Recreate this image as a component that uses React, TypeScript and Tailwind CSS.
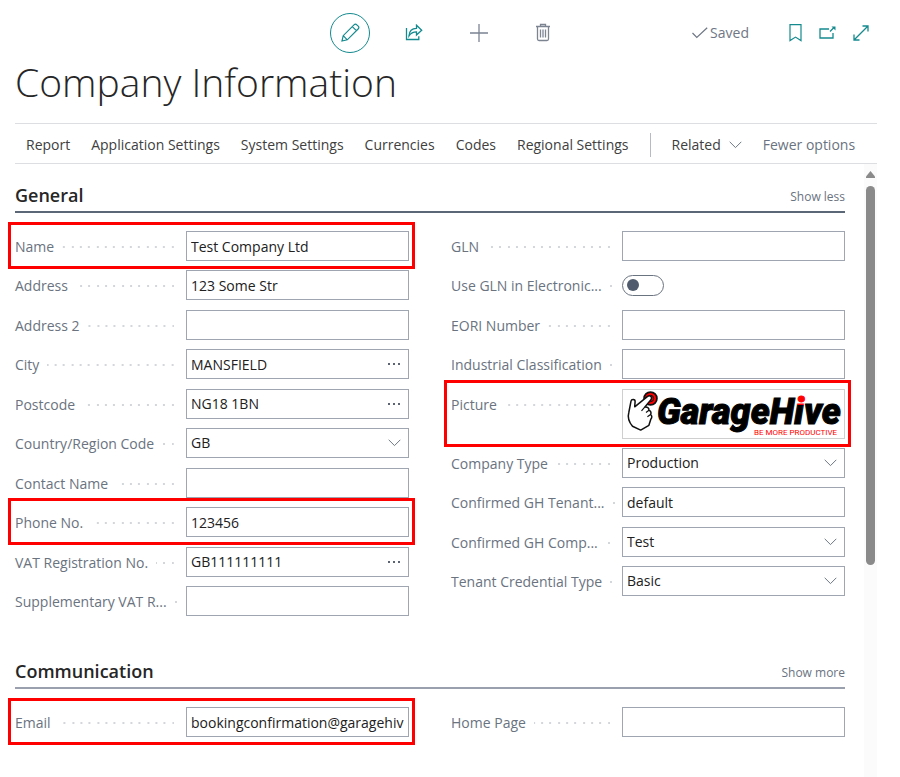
import { useId, type ReactNode } from "react";

const ink = "text-[#212121]";

function Chevron() {
  return (
    <svg width="13" height="8" viewBox="0 0 13 8" fill="none" stroke="#6f7785" aria-hidden="true">
      <path d="M.7.8 6.5 6.6 12.3.8" />
    </svg>
  );
}

function Highlight() {
  return (
    <span className="pointer-events-none absolute -top-[9px] -right-[6px] -bottom-[8px] -left-[7px] border-3 border-[#fe0000]" />
  );
}

function Row({
  label,
  id,
  highlight,
  tall,
  children,
}: {
  label: string;
  id?: string;
  highlight?: boolean;
  tall?: boolean;
  children: ReactNode;
}) {
  return (
    <div className={"relative flex " + (tall ? "h-[50px]" : "h-[30px]")}>
      <div className="flex h-8 w-[171px] shrink-0 items-center gap-2 pr-3">
        <label htmlFor={id} className="whitespace-nowrap text-[#6a7380]">
          {label}
        </label>
        <span className="h-[2px] min-w-[2px] flex-1 bg-[linear-gradient(90deg,transparent_6px,#d3d6da_6px_8px,transparent_8px_14px,#d3d6da_14px_16px,transparent_16px_23px,#d3d6da_23px_25px)] bg-[length:25px_2px] bg-right" />
      </div>
      {children}
      {highlight && <Highlight />}
    </div>
  );
}

const box = "flex min-w-0 flex-1 items-center border border-[#a0a6b1] bg-white";

function TextRow({
  label,
  value = "",
  lookup,
  highlight,
  type = "text",
}: {
  label: string;
  value?: string;
  lookup?: boolean;
  highlight?: boolean;
  type?: string;
}) {
  const id = useId();
  return (
    <Row label={label} id={id} highlight={highlight}>
      <div className={box}>
        <input
          id={id}
          type={type}
          defaultValue={value}
          className={"mx-1 h-full w-full min-w-0 flex-1 bg-transparent outline-none " + ink}
        />
        {lookup && (
          <button type="button" aria-label={"Look up " + label} className="flex h-full items-center px-[7px]">
            <svg width="13" height="2" viewBox="0 0 13 2" fill="#5b6472" aria-hidden="true">
              <path d="M0 0h2v2H0zM5 0h2v2H5zM10 0h2v2h-2z" />
            </svg>
          </button>
        )}
      </div>
    </Row>
  );
}

function SelectRow({ label, value }: { label: string; value: string }) {
  const id = useId();
  return (
    <Row label={label} id={id}>
      <div className={box + " relative"}>
        <select id={id} defaultValue={value} className={"h-full w-full appearance-none bg-transparent px-1 outline-none " + ink}>
          <option>{value}</option>
        </select>
        <span className="pointer-events-none absolute right-[7px]">
          <Chevron />
        </span>
      </div>
    </Row>
  );
}

function ToggleRow({ label }: { label: string }) {
  const id = useId();
  return (
    <Row label={label} id={id}>
      <span className="relative flex h-[21px] w-[42px] items-center self-center">
        <input
          id={id}
          type="checkbox"
          role="switch"
          className="peer h-full w-full appearance-none rounded-full border border-[#6a7380] bg-white"
        />
        <span className="pointer-events-none absolute left-[5px] size-3 rounded-full bg-[#505c6d] peer-checked:left-[25px]" />
      </span>
    </Row>
  );
}

function Logo() {
  return (
    <svg width="219" height="48" viewBox="0 0 219 48" role="img" aria-label="GarageHive" className="shrink-0">
      <defs>
        <linearGradient id="hive-dot" gradientUnits="userSpaceOnUse" x1="0" y1="0" x2="0" y2="48">
          <stop offset="0.31" stopColor="#f00" />
          <stop offset="0.31" stopColor="#000" />
        </linearGradient>
      </defs>
      <circle cx="27.500" cy="8.500" r="6.400" fill="#f00" stroke="#111" strokeWidth="1.800" />
      <circle cx="27.500" cy="8.500" r="3.200" fill="none" stroke="#111" strokeWidth="1" />
      <path
        d="M5.800 22.500 8 11.200c.5-2.500 4.300-2.200 4.100.4l-.4 5.200L24.600 6.400c2.600-1.900 5.200 1 3.300 3.300l-6.200 7.500c2.700-.5 4.300.7 4.300 3 1.900.8 2.500 2.500 1.600 4.300 1.500 1.200 1.600 3 .2 4.700l-1.900 6.100-8.200 4.800-8.200-3.800c-3.300-4-5-9.300-3.700-13.800z"
        fill="#fff"
        stroke="#111"
        strokeWidth="1.500"
        strokeLinejoin="round"
      />
      <path d="m21.700 17.200-3.200 3.600M26 20.200l-3 2.200M27.600 24.500l-3.200 2.200" stroke="#111" strokeWidth="1.200" fill="none" />
      <text x="34" y="34" stroke="#000" strokeWidth="1" className="fill-black font-['Roboto',sans-serif] text-[36px] font-black italic">
        GarageH
        <tspan fill="url(#hive-dot)" stroke="url(#hive-dot)">
          i
        </tspan>
        ve
      </text>
      <text x="131" y="45" className="fill-[#f00] font-['Roboto',sans-serif] text-[8px]">
        BE MORE PRODUCTIVE
      </text>
    </svg>
  );
}

function Section({
  title,
  action,
  line,
  children,
}: {
  title: string;
  action: string;
  line: string;
  children: ReactNode;
}) {
  return (
    <section>
      <header className={"flex items-center justify-between border-b-2 pb-[3px] " + line}>
        <h2 className="text-[18px] leading-[26px] font-semibold text-[#262626]">{title}</h2>
        <button type="button" className="pt-1 text-[12px] leading-4 text-[#6a7380]">
          {action}
        </button>
      </header>
      <div className="mt-[18px] grid grid-cols-2 items-start gap-x-[42px]">{children}</div>
    </section>
  );
}

const menus = ["Report", "Application Settings", "System Settings", "Currencies", "Codes", "Regional Settings"];

export default function App() {
  return (
    <main className="flex min-h-screen flex-col bg-white pr-[23px] pl-[15px] font-['Open_Sans','Noto_Sans',sans-serif] text-[14px] leading-5">
      <div className="flex h-[65px] items-center">
        <div className="ml-[315px] flex items-center gap-[34px] text-[#148a8f]">
          <button type="button" aria-label="Edit" className="flex size-10 items-center justify-center rounded-full border border-[#148a8f]">
            <svg width="20" height="20" viewBox="0 0 20 20" fill="none" stroke="currentColor" strokeWidth="1.200">
              <path d="m2 18 1.200-5.300L14 1.900c.9-.9 2-.9 2.800-.1l1.400 1.400c.8.800.8 1.900-.1 2.800L7.300 16.800zM3.200 12.700l4.100 4.100M12.300 3.600l4.100 4.100" />
            </svg>
          </button>
          <button type="button" aria-label="Share" className="flex w-5 justify-center">
            <svg width="18" height="18" viewBox="0 0 18 18" fill="none" stroke="currentColor" strokeWidth="1.300">
              <path d="M1.500 4v11.500h12.300v-3.300M4 11.800c.3-4.600 3-7.300 7.500-7.400V1.200l5.200 5-5.200 4.800V7.800c-3.500 0-5.700 1.200-7.500 4z" />
            </svg>
          </button>
        </div>
        <div className="ml-[46px] flex items-center gap-[46px] text-[#7c8492]">
          <button type="button" aria-label="New">
            <svg width="18" height="18" viewBox="0 0 18 18" fill="none" stroke="currentColor" strokeWidth="1.300">
              <path d="M9 0v18M0 9h18" />
            </svg>
          </button>
          <button type="button" aria-label="Delete">
            <svg width="18" height="20" viewBox="0 0 18 20" fill="none" stroke="currentColor" strokeWidth="1.300">
              <path d="M2 3.500h14M6.500 3.500v-2h5v2M3.500 3.500V16c0 1 .6 1.500 1.500 1.500h8c.9 0 1.500-.5 1.500-1.500V3.500" />
              <path d="M6.500 6.500v8M9 6.500v8M11.500 6.500v8" />
            </svg>
          </button>
        </div>
        <div className="ml-auto flex items-center gap-[2px] text-[#6f7785]">
          <svg width="16" height="12" viewBox="0 0 16 12" fill="none" stroke="currentColor" strokeWidth="1.200" aria-hidden="true">
            <path d="m.5 6 4.300 4.500L15.200.8" />
          </svg>
          <span>Saved</span>
        </div>
        <div className="mr-2 ml-10 flex items-center gap-[17px] text-[#148a8f]">
          <button type="button" aria-label="Bookmark">
            <svg width="13" height="18" viewBox="0 0 13 18" fill="none" stroke="currentColor" strokeWidth="1.200">
              <path d="M1 .6h11v16l-5.500-3.500L1 16.600z" />
            </svg>
          </button>
          <button type="button" aria-label="Open in new window">
            <svg width="17" height="14" viewBox="0 0 17 14" fill="none" stroke="currentColor" strokeWidth="1.300">
              <path d="M10 3H1v9h13V7M11 5.500 15 1.500" />
              <path d="M12.500.5H16.500V4.500z" fill="currentColor" stroke="none" />
            </svg>
          </button>
          <button type="button" aria-label="Expand">
            <svg width="16" height="16" viewBox="0 0 16 16" fill="none" stroke="currentColor" strokeWidth="1.300">
              <path d="M1 15 15 1M9.500 1H15v5.500M1 9.500V15h5.500" />
            </svg>
          </button>
        </div>
      </div>

      <h1 className="h-[58px] text-[39px] leading-[34px] font-light text-[#262626]">Company Information</h1>

      <nav className="flex h-[41px] items-center gap-[21px] border-y border-[#dcdee1] pt-[2px] pl-[11px] whitespace-nowrap text-[#404040]">
        {menus.map((m) => (
          <button key={m} type="button">
            {m}
          </button>
        ))}
        <span className="h-6 w-px bg-[#b5bac3]" />
        <button type="button" className="flex items-center gap-2">
          Related <Chevron />
        </button>
        <button type="button" className="text-[#6a7380]">
          Fewer options
        </button>
      </nav>

      <div className="flex flex-1 gap-[19px]">
        <div className="flex min-w-0 flex-1 flex-col gap-[42px] pt-[18px]">
          <Section title="General" action="Show less" line="border-[#5b6776]">
            <div className="flex h-[385px] flex-col justify-between">
              <TextRow label="Name" value="Test Company Ltd" highlight />
              <TextRow label="Address" value="123 Some Str" />
              <TextRow label="Address 2" />
              <TextRow label="City" value="MANSFIELD" lookup />
              <TextRow label="Postcode" value="NG18 1BN" lookup />
              <SelectRow label="Country/Region Code" value="GB" />
              <TextRow label="Contact Name" />
              <TextRow label="Phone No." value="123456" highlight />
              <TextRow label="VAT Registration No." value="GB111111111" lookup />
              <TextRow label="Supplementary VAT R..." />
            </div>
            <div className="flex h-[365px] flex-col justify-between">
              <TextRow label="GLN" />
              <ToggleRow label="Use GLN in Electronic..." />
              <TextRow label="EORI Number" />
              <TextRow label="Industrial Classification" />
              <Row label="Picture" highlight tall>
                <div className="flex min-w-0 flex-1 overflow-hidden border border-[#cfcfcf]">
                  <Logo />
                </div>
              </Row>
              <SelectRow label="Company Type" value="Production" />
              <TextRow label="Confirmed GH Tenant..." value="default" />
              <SelectRow label="Confirmed GH Comp..." value="Test" />
              <SelectRow label="Tenant Credential Type" value="Basic" />
            </div>
          </Section>
          <Section title="Communication" action="Show more" line="border-[#9aa0ad]">
            <TextRow label="Email" type="email" value="bookingconfirmation@garagehive.co.uk" highlight />
            <TextRow label="Home Page" />
          </Section>
        </div>
        <div className="flex w-[13px] flex-col items-center gap-2 bg-[#fbfbfb] pt-[7px]" aria-hidden="true">
          <svg width="9" height="7" viewBox="0 0 9 7" fill="#8a8a8a">
            <path d="M4.500 0 9 5.500V7H0V5.500z" />
          </svg>
          <span className="h-[379px] w-[9px] rounded-full bg-[#8a8a8a]" />
        </div>
      </div>
    </main>
  );
}
